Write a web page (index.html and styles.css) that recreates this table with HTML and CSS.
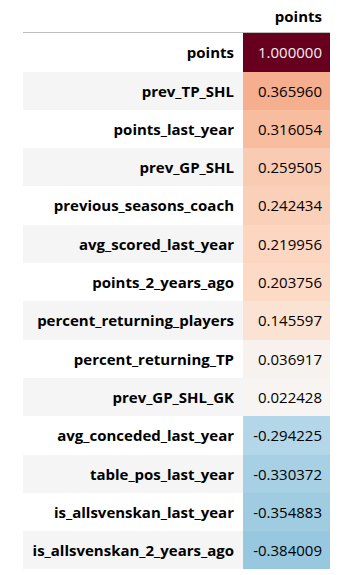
FILE: index.html
```html
<!DOCTYPE html>
<html>
<head>
<meta charset="utf-8">
<link rel="stylesheet" href="styles.css">
</head>
<body>
<table class="corr">
  <thead>
    <tr><th class="blank"></th><th class="col-head">points</th></tr>
  </thead>
  <tbody>
    <tr><th class="row-head">points</th><td class="val dark" style="background:#67001f">1.000000</td></tr>
    <tr><th class="row-head">prev_TP_SHL</th><td class="val" style="background:#f5ae8e">0.365960</td></tr>
    <tr><th class="row-head">points_last_year</th><td class="val" style="background:#f8bc9f">0.316054</td></tr>
    <tr><th class="row-head">prev_GP_SHL</th><td class="val" style="background:#facbb3">0.259505</td></tr>
    <tr><th class="row-head">previous_seasons_coach</th><td class="val" style="background:#fbd0b8">0.242434</td></tr>
    <tr><th class="row-head">avg_scored_last_year</th><td class="val" style="background:#fcd6c0">0.219956</td></tr>
    <tr><th class="row-head">points_2_years_ago</th><td class="val" style="background:#fddac6">0.203756</td></tr>
    <tr><th class="row-head">percent_returning_players</th><td class="val" style="background:#fbe3d4">0.145597</td></tr>
    <tr><th class="row-head">percent_returning_TP</th><td class="val" style="background:#f8f2ee">0.036917</td></tr>
    <tr><th class="row-head">prev_GP_SHL_GK</th><td class="val" style="background:#f8f4f2">0.022428</td></tr>
    <tr><th class="row-head">avg_conceded_last_year</th><td class="val" style="background:#b3d6e8">-0.294225</td></tr>
    <tr><th class="row-head">table_pos_last_year</th><td class="val" style="background:#a8d0e4">-0.330372</td></tr>
    <tr><th class="row-head">is_allsvenskan_last_year</th><td class="val" style="background:#a0cce2">-0.354883</td></tr>
    <tr><th class="row-head">is_allsvenskan_2_years_ago</th><td class="val" style="background:#97c8df">-0.384009</td></tr>
  </tbody>
</table>
</body>
</html>
```

FILE: styles.css
```css
html, body {
  margin: 0;
  padding: 0;
  background: #ffffff;
}

body {
  font-family: "Open Sans", "Noto Sans", "Liberation Sans", sans-serif;
  font-size: 15px;
  color: #000000;
}

.corr {
  margin-left: 23px;
  border-collapse: collapse;
  border-spacing: 0;
  table-layout: fixed;
  width: 307px;
}

.corr th,
.corr td {
  text-align: right;
  vertical-align: middle;
  line-height: 20.3px;
  white-space: nowrap;
  box-sizing: border-box;
}

.blank {
  width: 220px;
  padding: 0;
}

.col-head {
  width: 87px;
  padding: 6px 8px 6px 0;
  font-weight: 700;
}

.corr thead tr {
  border-bottom: 1px solid #bdbdbd;
}

.row-head {
  font-weight: 700;
  padding: 9px 9px 9px 0;
}

.corr tbody tr:nth-child(even) .row-head {
  background: #f5f5f5;
}

.val {
  padding: 9px 8px 9px 0;
  font-weight: 400;
}

.val.dark {
  color: #f1f1f1;
}
```
